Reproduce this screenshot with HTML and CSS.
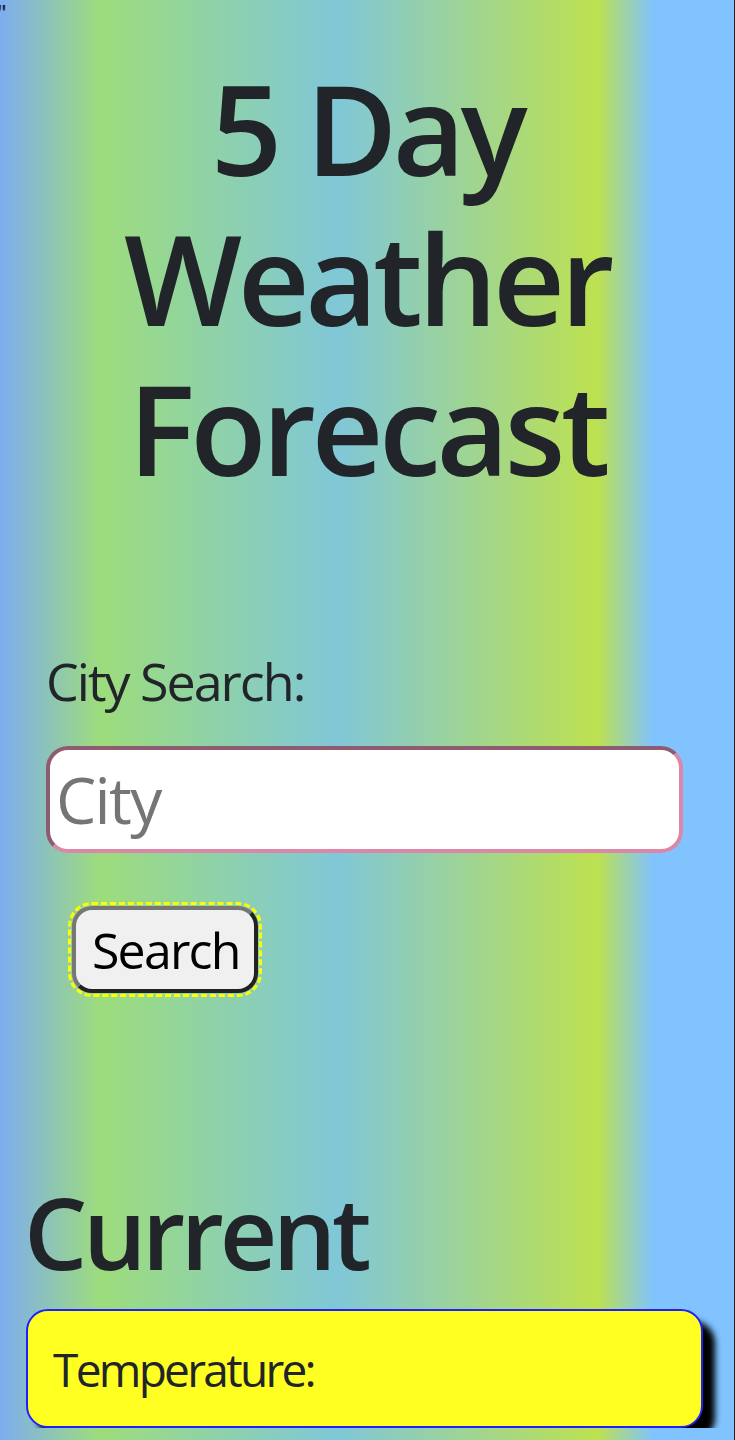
FILE: index.html
```html
<!DOCTYPE html>
<html lang="en">
<head>
<meta charset="utf-8">
<title>5 Day Weather Forecast</title>
<link rel="stylesheet" href="styles.css">
</head>
<body>
<div class="stray">"</div>
<main class="page">
  <h1 class="title">5 Day Weather Forecast</h1>
  <section class="search">
    <label class="search-label" for="city">City Search:</label>
    <input class="city-input" id="city" type="text" placeholder="City">
    <button class="search-btn" type="button">Search</button>
  </section>
  <section class="current">
    <h2 class="current-title">Current</h2>
    <div class="card">
      <p class="card-text">Temperature:</p>
    </div>
  </section>
</main>
</body>
</html>
```
FILE: styles.css
```css
html {
  min-height: 100%;
  background: linear-gradient(to right, #7eadef 0%, #9ddc7c 13.7%, #80c7d8 45.9%, #bde150 81.4%, #80c3ff 89%, #80c3ff 100%);
  border-right: 1px solid #222;
}
body {
  margin: 0;
  font-family: "Open Sans", "Liberation Sans", sans-serif;
  color: #212529;
}
.stray {
  height: 0;
  margin-left: -3px;
  font-size: 22px;
  font-weight: 600;
  line-height: 24px;
  color: #212529;
}
.page {
  padding-top: 53px;
}
.title {
  margin: 0;
  text-align: center;
  font-size: 125px;
  font-weight: 600;
  line-height: 150px;
  letter-spacing: -4.5px;
}
.search {
  display: flex;
  flex-direction: column;
  align-items: flex-start;
  padding: 0 51px 0 46px;
  margin-top: 146px;
}
.search-label {
  display: block;
  font-size: 52px;
  line-height: 64px;
  letter-spacing: -2px;
  margin-bottom: 33px;
}
.city-input {
  box-sizing: border-box;
  width: 100%;
  height: 107px;
  margin: 0;
  padding: 0 6px;
  border: 4px solid;
  border-color: #8f5b70 #db88a8 #db88a8 #8f5b70;
  border-radius: 22px;
  background: #fff;
  font-family: inherit;
  font-size: 64px;
  letter-spacing: -1.7px;
  color: #212529;
  outline: none;
}
.city-input::placeholder {
  color: #757575;
}
.search-btn {
  box-sizing: border-box;
  height: 87px;
  margin: 53px 0 0 26px;
  padding: 0 14px 0 16px;
  border: 4px solid;
  border-color: #777 #222 #222 #777;
  border-radius: 20px;
  background: #f0f0f0;
  font-family: inherit;
  font-size: 50px;
  letter-spacing: -1.8px;
  color: #000;
  outline: 3px dashed #ffff00;
  outline-offset: 1px;
}
.current {
  padding: 0 31px 0 21px;
  margin-top: 178px;
}
.current-title {
  margin: 0 0 0 3px;
  font-size: 100px;
  font-weight: 600;
  line-height: 120px;
  letter-spacing: -4.4px;
}
.card {
  box-sizing: border-box;
  display: flex;
  align-items: center;
  height: 119px;
  margin: 18px 0 0 5px;
  padding: 0 25px;
  border: 2px solid #2020ff;
  border-radius: 22px;
  background: #ffff22;
  box-shadow: 12px 12px 6px #000;
}
.card-text {
  margin: 0;
  font-size: 46px;
  letter-spacing: -2.7px;
}
```
